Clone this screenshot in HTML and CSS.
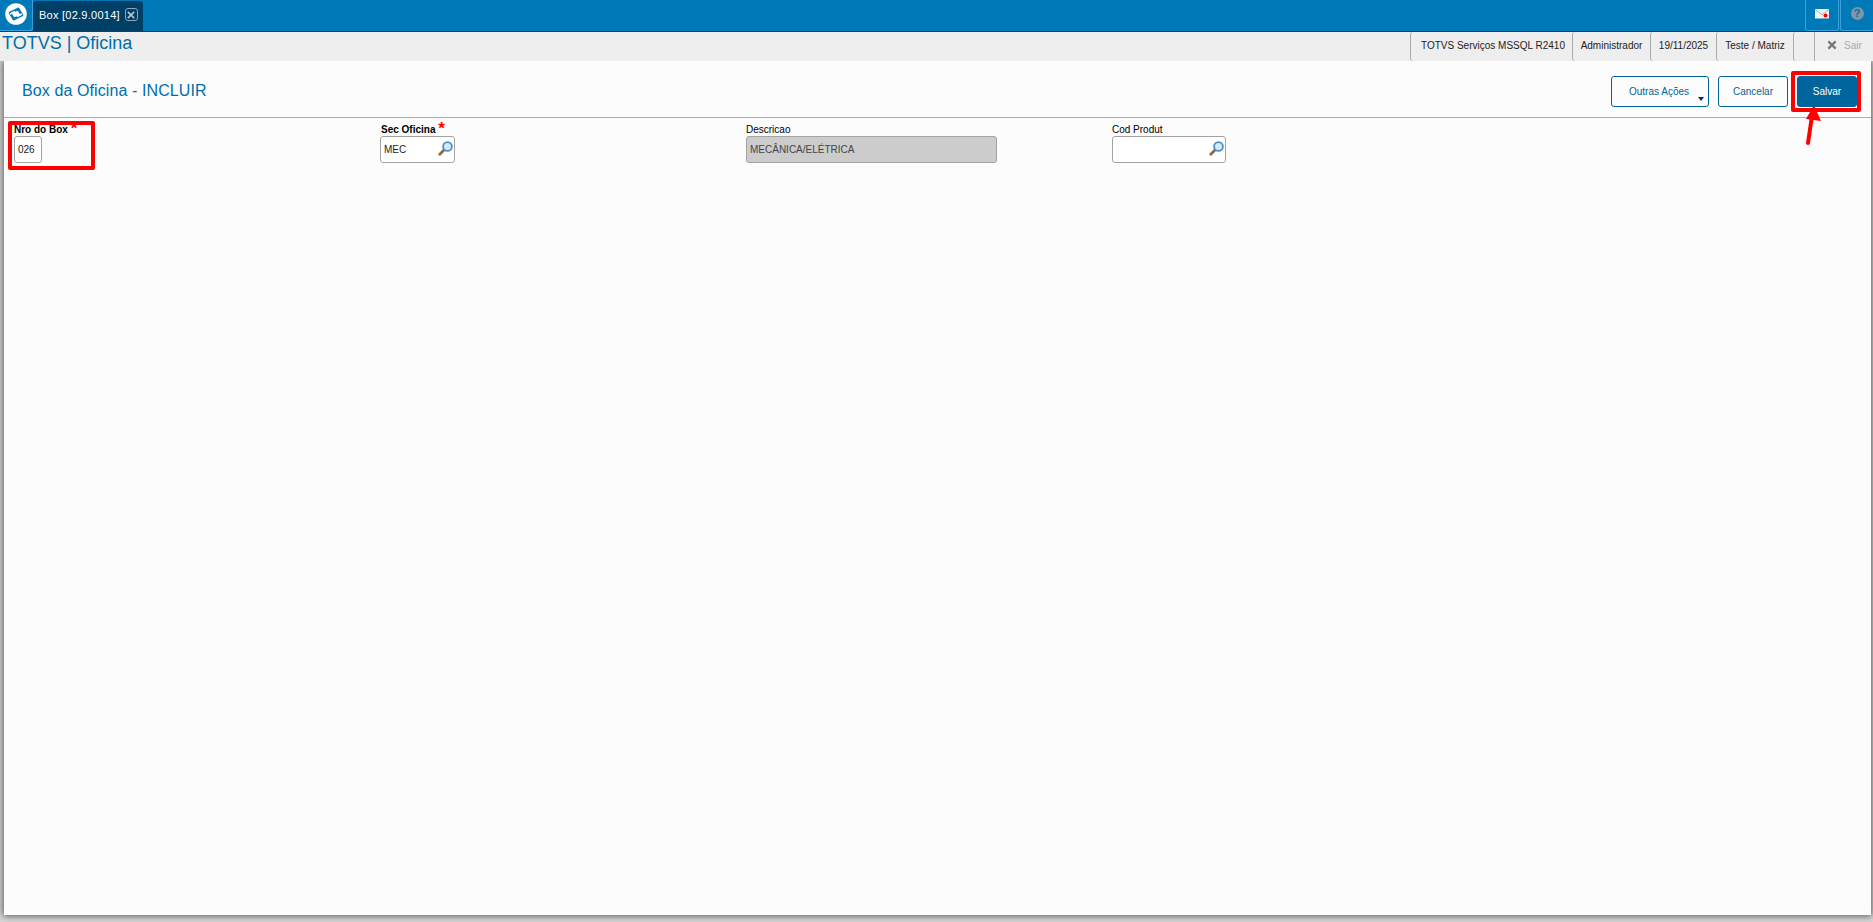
FILE: index.html
```html
<!DOCTYPE html>
<html lang="pt">
<head>
<meta charset="utf-8">
<title>Box da Oficina - INCLUIR</title>
<link rel="stylesheet" href="styles.css">
</head>
<body>
<header class="topbar">
  <div class="logo">
    <svg width="24" height="24" viewBox="0 0 24 24"><circle cx="12" cy="12" r="10.8" fill="#fff"/><path d="M6 10.8 L14.2 6.8 L18 13.2 L9.8 17.2 Z" fill="#fff" stroke="#0079b8" stroke-width="2.6" stroke-linejoin="round"/><path d="M6 12L11 9.5" stroke="#fff" stroke-width="1.6"/><path d="M18 12L13 14.5" stroke="#fff" stroke-width="1.6"/></svg>
  </div>
  <div class="tab">
    <span>Box [02.9.0014]</span>
    <span class="tab-close"><svg width="10" height="10" viewBox="0 0 11 11"><path d="M2 2 L9 9 M9 2 L2 9" stroke="#b5c4cf" stroke-width="1.8"/></svg></span>
  </div>
  <div class="top-actions">
    <div class="top-btn">
      <svg width="14" height="10" viewBox="0 0 14 10"><path d="M0 0H14V9.5H0Z" fill="#f2f2f2"/><path d="M0 .5L7 5.5L14 .5" fill="none" stroke="#9db5c6" stroke-width="1"/><circle cx="10.5" cy="6.5" r="2" fill="#f00"/></svg>
    </div>
    <div class="top-btn">
      <span class="help">?</span>
    </div>
  </div>
</header>
<div class="infobar">
  <div class="brand">TOTVS | Oficina</div>
  <div class="info-items">
    <div class="info-item info-env">TOTVS Serviços MSSQL R2410</div>
    <div class="info-item info-user">Administrador</div>
    <div class="info-item info-date">19/11/2025</div>
    <div class="info-item info-branch">Teste / Matriz</div>
    <div class="info-item info-gap"></div>
    <div class="info-exit">
      <svg width="10" height="10" viewBox="0 0 11 11"><path d="M1.5 1.5 L9.5 9.5 M9.5 1.5 L1.5 9.5" stroke="#777" stroke-width="2.4"/></svg>
      <span>Sair</span>
    </div>
  </div>
</div>
<main class="panel">
  <div class="panel-head">
    <h1 class="panel-title">Box da Oficina - INCLUIR</h1>
    <div class="actions">
      <button class="btn btn-more">Outras Ações<span class="caret"></span></button>
      <button class="btn btn-cancel">Cancelar</button>
      <button class="btn btn-save">Salvar</button>
    </div>
  </div>
  <form class="fields">
    <div class="field">
      <label class="lbl lbl-req">Nro do Box <i class="req">*</i></label>
      <div class="input w-box">026</div>
    </div>
    <div class="field">
      <label class="lbl lbl-req lbl-sec">Sec Oficina <i class="req">*</i></label>
      <div class="input w-sec">MEC
        <svg class="lens" width="15" height="15" viewBox="0 0 15 15"><path d="M6 9L1.8 13.2" stroke="#8a6a4a" stroke-width="2.8" stroke-linecap="round"/><circle cx="9.5" cy="5.5" r="4.4" fill="#d6ebfa" stroke="#4f8fc6" stroke-width="1.8"/></svg>
      </div>
    </div>
    <div class="field">
      <label class="lbl">Descricao</label>
      <div class="input w-desc disabled">MECÂNICA/ELÉTRICA</div>
    </div>
    <div class="field">
      <label class="lbl">Cod Produt</label>
      <div class="input w-cod">
        <svg class="lens" width="15" height="15" viewBox="0 0 15 15"><path d="M6 9L1.8 13.2" stroke="#8a6a4a" stroke-width="2.8" stroke-linecap="round"/><circle cx="9.5" cy="5.5" r="4.4" fill="#d6ebfa" stroke="#4f8fc6" stroke-width="1.8"/></svg>
      </div>
    </div>
  </form>
</main>
<div class="mark mark-field"></div>
<div class="mark mark-save"></div>
<svg class="mark-arrow" width="24" height="46" viewBox="0 0 24 46"><path d="M7 41L11 14" stroke="#f00" stroke-width="4" stroke-linecap="round"/><path d="M13 3L20 19L5 17Z" fill="#f00"/></svg>
</body>
</html>
```
FILE: styles.css
```css
* { box-sizing: border-box; }
html, body { height: 100%; }
body {
  margin: 0;
  height: 922px;
  overflow: hidden;
  background: #d8d8d8;
  font-family: "Liberation Sans", Arial, sans-serif;
  font-size: 11px;
  color: #000;
  display: flex;
  flex-direction: column;
  position: relative;
}
.topbar {
  height: 32px;
  flex: none;
  display: flex;
  align-items: stretch;
  background: #0079b8;
  border-bottom: 1px solid #00466e;
}
.logo {
  width: 33px;
  display: flex;
  align-items: center;
  justify-content: center;
  border: 1px solid #3aa0dc;
  border-top: 0;
  border-left: 0;
  border-radius: 0 0 3px 0;
  padding-bottom: 3px;
}
.tab {
  width: 110px;
  margin-top: 1px;
  background: #003f66;
  color: #fff;
  border-radius: 3px 3px 0 0;
  display: flex;
  align-items: center;
  gap: 5px;
  padding: 0 0 3px 6px;
  font-size: 11px;
  letter-spacing: .25px;
}
.tab-close {
  width: 13px;
  height: 13px;
  border: 1px solid #8ba6b8;
  border-radius: 3px;
  display: flex;
  align-items: center;
  justify-content: center;
}
.top-actions { margin-left: auto; display: flex; gap: 1px; }
.top-btn {
  width: 34px;
  display: flex;
  align-items: center;
  justify-content: center;
  border: 1px solid #3aa0dc;
  border-top: 0;
  border-radius: 0 0 3px 3px;
  padding-bottom: 3px;
}
.top-btn:last-child { width: 33px; border-right: 0; }
.help {
  width: 13px;
  height: 13px;
  border-radius: 50%;
  background: #7f97a7;
  color: #0d6a99;
  font-weight: bold;
  font-size: 11px;
  line-height: 13px;
  text-align: center;
}
.infobar {
  height: 29px;
  flex: none;
  background: #eee;
  display: flex;
  justify-content: space-between;
}
.brand {
  font-size: 18px;
  color: #006fa8;
  padding: 0 0 0 2px;
  line-height: 23px;
}
.info-items { display: flex; color: #222; }
.info-item {
  border-left: 1px solid #aaa;
  display: flex;
  align-items: center;
  justify-content: center;
  height: 29px;
  padding-bottom: 3px;
  font-size: 10px;
  border-radius: 3px 0 0 3px;
}
.info-env { width: 162px; padding-left: 3px; }
.info-user { width: 78px; }
.info-date { width: 66px; }
.info-branch { width: 77px; }
.info-gap { width: 21px; }
.info-exit {
  width: 59px;
  border-left: 1px solid #aaa;
  display: flex;
  align-items: center;
  padding: 0 0 3px 12px;
  gap: 7px;
  font-size: 10px;
  color: #aaa;
}
.panel {
  flex: none;
  height: 854px;
  margin: 0 2px 0 4px;
  background: #fcfcfc;
  box-shadow: 0 0 7px 1px #555;
  clip-path: inset(0 -10px -10px -10px);
}
.panel-head {
  height: 57px;
  border-bottom: 1px solid #a6adaa;
  display: flex;
  justify-content: space-between;
  align-items: flex-start;
}
.panel-title {
  margin: 0;
  padding: 20px 0 0 18px;
  font-weight: normal;
  font-size: 16px;
  letter-spacing: .1px;
  line-height: 20px;
  color: #006fa8;
}
.actions {
  display: flex;
  gap: 9px;
  padding: 15px 14px 0 0;
}
.btn {
  height: 31px;
  padding: 0;
  border: 1px solid #00659c;
  border-radius: 3px;
  background: #fcfcfc;
  color: #00659c;
  font: 10px "Liberation Sans", Arial, sans-serif;
  position: relative;
}
.btn-more { width: 98px; padding-right: 2px; }
.btn-cancel { width: 70px; }
.btn-save { width: 60px; background: #00659c; color: #fff; }
.caret {
  position: absolute;
  right: 4px;
  bottom: 5px;
  border: 3px solid transparent;
  border-top: 4px solid #1a1a8c;
  border-bottom: 0;
}
.fields {
  display: grid;
  grid-template-columns: repeat(4, 366px);
  padding: 6px 0 0 10px;
}
.field { display: flex; flex-direction: column; align-items: flex-start; }
.lbl { font-size: 10px; line-height: 12px; height: 12px; white-space: nowrap; position: relative; }
.lbl-req { font-weight: bold; }
.lbl-sec { left: 1px; }
.req {
  color: #f00;
  font-style: normal;
  font-size: 17px;
  line-height: 12px;
  position: relative;
  top: -1px;
  margin-left: 0;
  vertical-align: top;
}
.input {
  height: 27px;
  border: 1px solid #a3a3a3;
  border-radius: 3px;
  background: #fff;
  display: flex;
  align-items: center;
  padding-left: 3px;
  font-size: 10px;
  color: #222;
  position: relative;
}
.w-box { width: 28px; }
.w-sec { width: 75px; }
.w-desc { width: 251px; }
.w-cod { width: 114px; }
.disabled { background: #ccc; color: #444; }
.lens { position: absolute; right: 1px; top: 4px; }
.mark { position: absolute; border: 4px solid #f00; border-radius: 2px; }
.mark-field { left: 8px; top: 121px; width: 87px; height: 49px; }
.mark-save { left: 1791px; top: 71px; width: 70px; height: 41px; }
.mark-arrow { position: absolute; left: 1801px; top: 102px; }
```
